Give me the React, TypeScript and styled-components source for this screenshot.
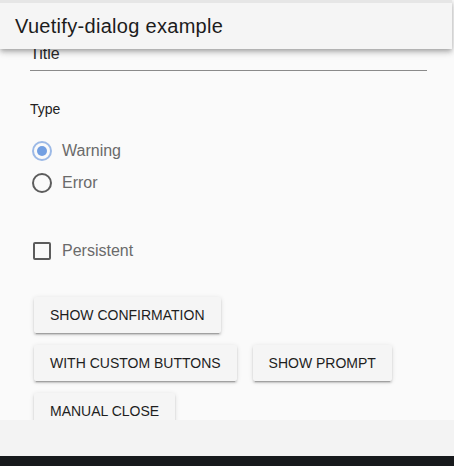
import React from 'react';
import styled, { createGlobalStyle } from 'styled-components';

const GlobalStyle = createGlobalStyle`
  html, body {
    margin: 0;
    padding: 0;
    background: #fafafa;
  }
  body {
    font-family: 'Liberation Sans', Arial, sans-serif;
  }
`;

const typeOptions = [
  { label: 'Warning', checked: true },
  { label: 'Error', checked: false },
];

const buttonRows = [
  ['Show confirmation'],
  ['With custom buttons', 'Show prompt'],
  ['Manual close'],
];

const App = () => {
  return (
    <Page>
      <GlobalStyle />
      <Toolbar>
        <ToolbarTitle>Vuetify-dialog example</ToolbarTitle>
      </Toolbar>
      <Scroller>
        <Content>
          <TextField>
            <FieldLabel>Title</FieldLabel>
          </TextField>
          <GroupLabel>Type</GroupLabel>
          <RadioGroup>
            {typeOptions.map((opt) => (
              <OptionRow key={opt.label}>
                <RadioCircle $checked={opt.checked} />
                <OptionLabel>{opt.label}</OptionLabel>
              </OptionRow>
            ))}
          </RadioGroup>
          <OptionRow $spaced>
            <CheckBox />
            <OptionLabel>Persistent</OptionLabel>
          </OptionRow>
          <Buttons>
            {buttonRows.map((row) => (
              <ButtonRow key={row[0]}>
                {row.map((label) => (
                  <Button key={label}>{label}</Button>
                ))}
              </ButtonRow>
            ))}
          </Buttons>
        </Content>
      </Scroller>
      <Footer />
      <BottomBar />
    </Page>
  );
};

const Page = styled.div`
  height: 466px;
  display: flex;
  flex-direction: column;
  background: #fafafa;
  overflow: hidden;
`;

const Toolbar = styled.header`
  position: relative;
  z-index: 2;
  height: 46px;
  margin-right: 2px;
  display: flex;
  align-items: center;
  padding: 0 15px;
  background: #f5f5f5;
  border-top: 3px solid #e6e6e6;
  box-shadow: 0 2px 4px -1px rgba(0, 0, 0, 0.2), 0 4px 5px 0 rgba(0, 0, 0, 0.14),
    0 1px 10px 0 rgba(0, 0, 0, 0.12);
  flex-shrink: 0;
`;

const ToolbarTitle = styled.h1`
  margin: 0;
  font-size: 20px;
  font-weight: 400;
  color: #1c1c1c;
  letter-spacing: 0.3px;
`;

const Scroller = styled.main`
  flex: 1;
  overflow: hidden;
`;

const Content = styled.div`
  margin-top: -6px;
  padding: 0 27px 0 30px;
`;

const TextField = styled.div`
  height: 28px;
  border-bottom: 1px solid #8a8a8a;
  display: flex;
  align-items: flex-end;
  padding-bottom: 7px;
  box-sizing: border-box;
`;

const FieldLabel = styled.span`
  font-size: 16px;
  color: #2a2a2a;
`;

const GroupLabel = styled.div`
  margin-top: 30px;
  font-size: 14px;
  color: #222;
`;

const RadioGroup = styled.div`
  margin-top: 24px;
  display: flex;
  flex-direction: column;
  gap: 12px;
`;

const OptionRow = styled.div<{ $spaced?: boolean }>`
  display: flex;
  align-items: center;
  height: 20px;
  gap: 10px;
  padding-left: 2px;
  margin-top: ${(p) => (p.$spaced ? '48px' : '0')};
`;

const RadioCircle = styled.span<{ $checked: boolean }>`
  width: 20px;
  height: 20px;
  box-sizing: border-box;
  border-radius: 50%;
  border: 2px solid ${(p) => (p.$checked ? '#9cb9e6' : '#5c5c5c')};
  display: flex;
  align-items: center;
  justify-content: center;
  &::after {
    content: '';
    display: ${(p) => (p.$checked ? 'block' : 'none')};
    width: 10px;
    height: 10px;
    border-radius: 50%;
    background: #729fe2;
  }
`;

const CheckBox = styled.span`
  width: 18px;
  height: 18px;
  margin-left: 1px;
  margin-right: 1px;
  box-sizing: border-box;
  border: 2px solid #5c5c5c;
  border-radius: 2px;
`;

const OptionLabel = styled.span`
  font-size: 16px;
  color: #6a6a6a;
`;

const Buttons = styled.div`
  margin-top: 36px;
  display: flex;
  flex-direction: column;
  gap: 12px;
  padding-left: 4px;
`;

const ButtonRow = styled.div`
  display: flex;
  gap: 16px;
`;

const Button = styled.button`
  height: 36px;
  padding: 0 16px;
  border: none;
  border-radius: 2px;
  background: #f5f5f5;
  color: #1e1e1e;
  font-family: 'Liberation Sans', Arial, sans-serif;
  font-size: 14px;
  text-transform: uppercase;
  box-shadow: 0 3px 1px -2px rgba(0, 0, 0, 0.2), 0 2px 2px 0 rgba(0, 0, 0, 0.14),
    0 1px 5px 0 rgba(0, 0, 0, 0.12);
  cursor: pointer;
`;

const Footer = styled.footer`
  height: 36px;
  flex-shrink: 0;
  background: #f3f3f3;
`;

const BottomBar = styled.div`
  height: 10px;
  flex-shrink: 0;
  background: #17191c;
`;

export default App;
